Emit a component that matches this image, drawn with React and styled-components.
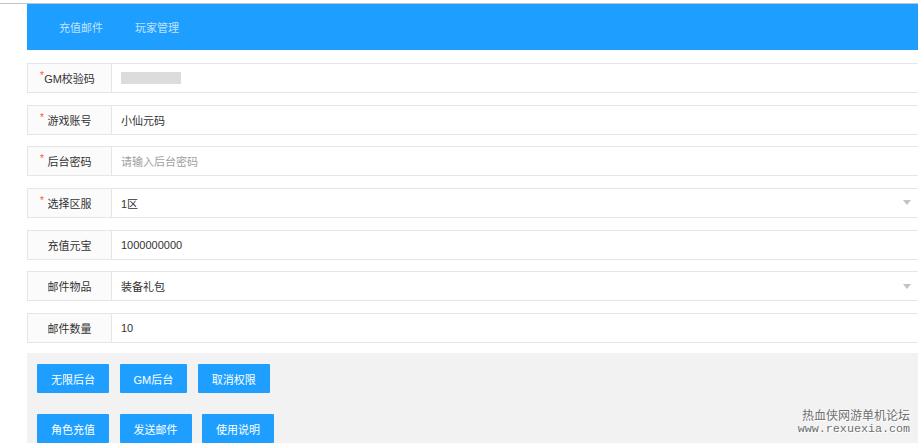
import React from "react";
import styled, { createGlobalStyle } from "styled-components";

const Global = createGlobalStyle`
  html, body { margin: 0; padding: 0; background: #fff; overflow: hidden; }
  body {
    font-family: "Liberation Sans", "Noto Sans CJK SC", sans-serif;
    font-size: 11px;
    color: #333;
  }
`;

const Page = styled.div`
  position: relative;
  width: 918px;
  height: 443px;
  overflow: hidden;
`;

const TopRule = styled.div`
  height: 3px;
  border-bottom: 1px solid #c4c4c4;
`;

const Main = styled.div`
  padding-left: 27px;
`;

const Header = styled.nav`
  height: 46px;
  background: #1e9fff;
  display: flex;
  align-items: center;
  padding-left: 16px;
`;

const NavItem = styled.span`
  padding: 0 16px;
  color: rgba(255, 255, 255, 0.72);
  font-size: 11px;
`;

const Form = styled.div`
  padding-top: 13px;
  margin-right: -1px;
`;

const Row = styled.div`
  display: flex;
  height: 30px;
  margin-bottom: ${(p) => (p.$last ? "10px" : "11.67px")};
`;

const Label = styled.div`
  position: relative;
  width: 85px;
  box-sizing: border-box;
  border: 1px solid #e6e6e6;
  background: #fbfbfb;
  display: flex;
  align-items: center;
  justify-content: center;
  color: #333;
`;

const Star = styled.span`
  position: absolute;
  left: 12px;
  top: 7px;
  color: #ff5722;
  font-size: 10px;
  line-height: 10px;
`;

const Field = styled.div`
  flex: 1;
  box-sizing: border-box;
  border: 1px solid #e6e6e6;
  border-left: 0;
  display: flex;
  align-items: center;
  padding-left: 9px;
  padding-right: 6px;
  color: ${(p) => (p.$placeholder ? "#a0a0a0" : "#333")};
`;

const Value = styled.span`
  flex: 1;
`;

const Redacted = styled.span`
  display: block;
  width: 60px;
  height: 12px;
  background: #dcdcdc;
  filter: blur(0.6px);
`;

const Caret = styled.span`
  width: 0;
  height: 0;
  border-left: 4.5px solid transparent;
  border-right: 4.5px solid transparent;
  border-top: 5px solid #c2c2c2;
  margin-right: 1px;
`;

const Panel = styled.div`
  background: #f2f2f2;
  padding: 11px 0 0 10px;
  height: 90px;
  box-sizing: border-box;
  display: flex;
  flex-direction: column;
  gap: 20.5px;
`;

const BtnRow = styled.div`
  display: flex;
  gap: 10.5px;
`;

const Button = styled.button`
  height: 29.5px;
  padding: 0 14px;
  border: 0;
  border-radius: 1px;
  background: #1e9fff;
  color: #fff;
  font-family: "Liberation Sans", "Noto Sans CJK SC", sans-serif;
  font-size: 11px;
  white-space: nowrap;
`;

const Watermark = styled.div`
  position: absolute;
  right: 8px;
  bottom: 8px;
  text-align: right;
  color: #6f6f6f;
  text-shadow: 1px 1px 0 #fff, -1px 0 0 #fafafa;
`;

const WmTitle = styled.div`
  font-family: "Noto Sans CJK SC", sans-serif;
  font-size: 12px;
  line-height: 13px;
`;

const WmUrl = styled.div`
  font-family: "Liberation Mono", monospace;
  font-size: 11.7px;
  line-height: 12px;
  margin-top: 2px;
`;

const fields = [
  { label: "GM校验码", req: true, redacted: true },
  { label: "游戏账号", req: true, value: "小仙元码" },
  { label: "后台密码", req: true, value: "请输入后台密码", placeholder: true },
  { label: "选择区服", req: true, value: "1区", select: true },
  { label: "充值元宝", value: "1000000000" },
  { label: "邮件物品", value: "装备礼包", select: true },
  { label: "邮件数量", value: "10" },
];

export default function App() {
  return (
    <Page>
      <Global />
      <TopRule />
      <Main>
        <Header>
          <NavItem>充值邮件</NavItem>
          <NavItem>玩家管理</NavItem>
        </Header>
        <Form>
          {fields.map((f, i) => (
            <Row key={f.label} $last={i === fields.length - 1}>
              <Label>
                {f.req && <Star>*</Star>}
                {f.label}
              </Label>
              <Field $placeholder={f.placeholder}>
                {f.redacted ? <Redacted /> : <Value>{f.value}</Value>}
                {f.select && <Caret />}
              </Field>
            </Row>
          ))}
        </Form>
        <Panel>
          <BtnRow>
            <Button>无限后台</Button>
            <Button>GM后台</Button>
            <Button>取消权限</Button>
          </BtnRow>
          <BtnRow>
            <Button>角色充值</Button>
            <Button>发送邮件</Button>
            <Button>使用说明</Button>
          </BtnRow>
        </Panel>
      </Main>
      <Watermark>
        <WmTitle>热血侠网游单机论坛</WmTitle>
        <WmUrl>www.rexuexia.com</WmUrl>
      </Watermark>
    </Page>
  );
}
